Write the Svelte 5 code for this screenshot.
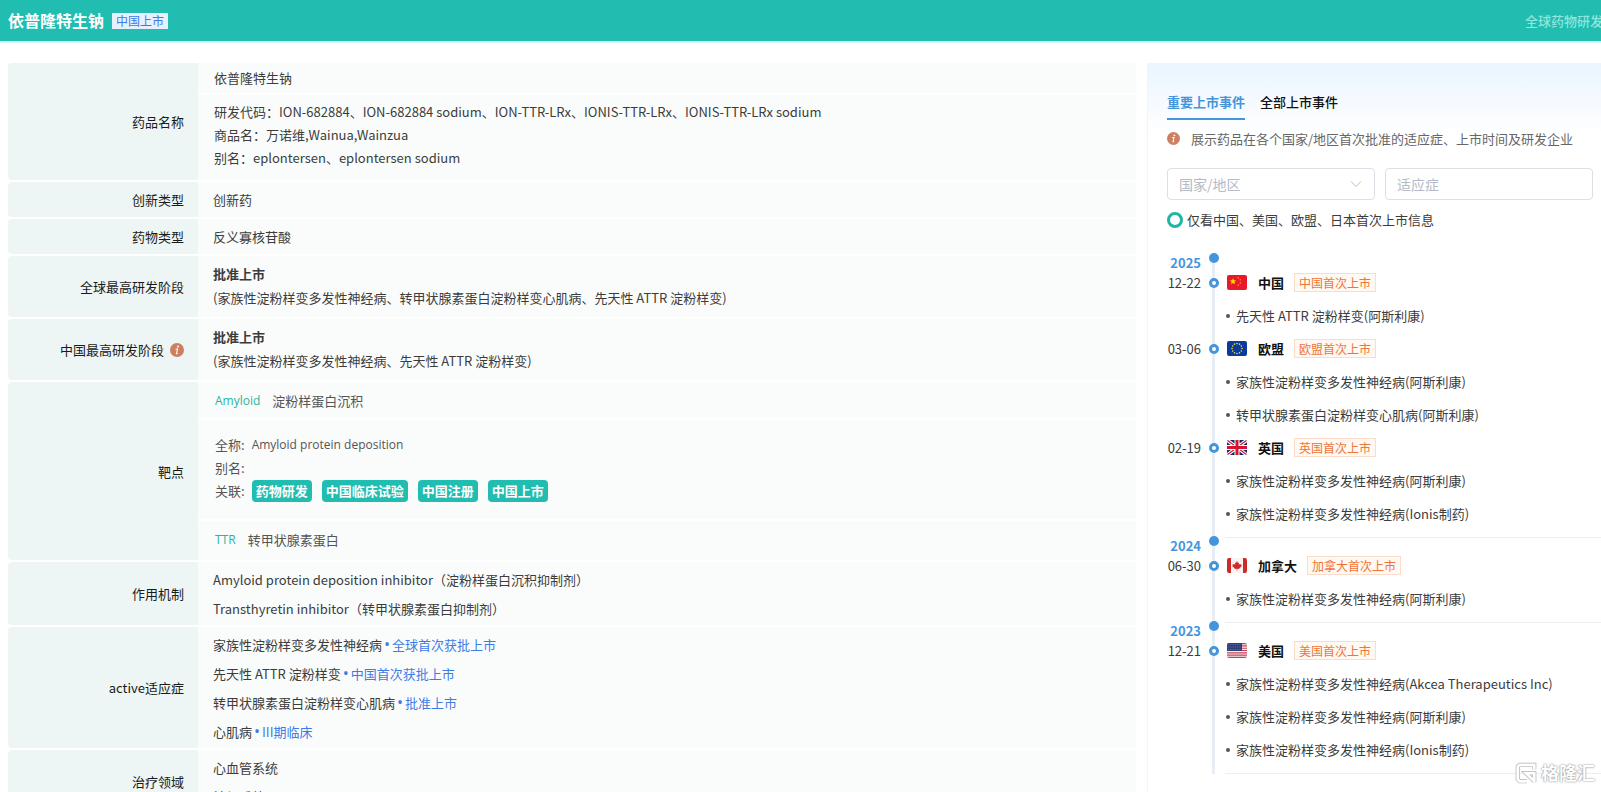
<script lang="ts">
  type Launch = {
    date: string;
    code: string;
    country: string;
    items: string[];
  };

  type YearGroup = {
    year: string;
    launches: Launch[];
  };

  const years: YearGroup[] = [
    {
      year: '2025',
      launches: [
        { date: '12-22', code: 'cn', country: '中国', items: ['先天性 ATTR 淀粉样变(阿斯利康)'] },
        {
          date: '03-06',
          code: 'eu',
          country: '欧盟',
          items: ['家族性淀粉样变多发性神经病(阿斯利康)', '转甲状腺素蛋白淀粉样变心肌病(阿斯利康)']
        },
        {
          date: '02-19',
          code: 'gb',
          country: '英国',
          items: ['家族性淀粉样变多发性神经病(阿斯利康)', '家族性淀粉样变多发性神经病(Ionis制药)']
        }
      ]
    },
    {
      year: '2024',
      launches: [
        { date: '06-30', code: 'ca', country: '加拿大', items: ['家族性淀粉样变多发性神经病(阿斯利康)'] }
      ]
    },
    {
      year: '2023',
      launches: [
        {
          date: '12-21',
          code: 'us',
          country: '美国',
          items: [
            '家族性淀粉样变多发性神经病(Akcea Therapeutics Inc)',
            '家族性淀粉样变多发性神经病(阿斯利康)',
            '家族性淀粉样变多发性神经病(Ionis制药)'
          ]
        }
      ]
    }
  ];

  const indications = [
    { name: '家族性淀粉样变多发性神经病', stage: '全球首次获批上市' },
    { name: '先天性 ATTR 淀粉样变', stage: '中国首次获批上市' },
    { name: '转甲状腺素蛋白淀粉样变心肌病', stage: '批准上市' },
    { name: '心肌病', stage: 'III期临床' }
  ];

  const related = ['药物研发', '中国临床试验', '中国注册', '中国上市'];

  let activeTab = $state('key');
  let region = $state('');
  let indication = $state('');

  // Twelve points on the EU circle
  const euStars = Array.from({ length: 12 }, (_, i) => {
    const a = (i * Math.PI) / 6;
    return { x: 10 + 5 * Math.sin(a), y: 7.5 - 5 * Math.cos(a) };
  });
</script>

{#snippet info()}
  <svg class="info" viewBox="0 0 14 14" aria-hidden="true">
    <circle cx="7" cy="7" r="7" fill="#cd7f5f" />
    <circle cx="8" cy="3.6" r="1" fill="#fff" />
    <path d="M5.6 6h1.9l-1 4.6h1.1" fill="none" stroke="#fff" stroke-width="1.1" />
  </svg>
{/snippet}

{#snippet flag(code: string)}
  <svg class="flag" viewBox="0 0 20 15" aria-hidden="true">
    {#if code === 'cn'}
      <rect width="20" height="15" fill="#e8192c" />
      <path d="M6 3.2l.9 2.1 2.3.2-1.8 1.5.6 2.2-2-1.2-2 1.2.6-2.2-1.8-1.5 2.3-.2z" fill="#ffde00" />
      <g fill="#ffb400">
        <circle cx="11.2" cy="2.8" r=".7" />
        <circle cx="13.3" cy="4.8" r=".7" />
        <circle cx="13.3" cy="8" r=".7" />
        <circle cx="11.2" cy="10.2" r=".7" />
      </g>
    {:else if code === 'eu'}
      <rect width="20" height="15" fill="#0b3a9c" />
      {#each euStars as s}
        <circle cx={s.x} cy={s.y} r=".8" fill="#e9dc45" />
      {/each}
    {:else if code === 'gb'}
      <rect width="20" height="15" fill="#1d2a68" />
      <path d="M0 0L20 15M20 0L0 15" stroke="#fff" stroke-width="3.4" />
      <path d="M0 0L20 15M20 0L0 15" stroke="#d0152f" stroke-width="1.2" />
      <path d="M10 0v15M0 7.5h20" stroke="#fff" stroke-width="5" />
      <path d="M10 0v15M0 7.5h20" stroke="#d0152f" stroke-width="3" />
    {:else if code === 'ca'}
      <rect width="20" height="15" fill="#f7f4f4" />
      <path d="M0 0h4v15H0zM16 0h4v15h-4z" fill="#cf2a27" />
      <path
        d="M10 3L11 5 12 4.500 11.800 6.800 13 5.800 13.300 6.500 14.700 6.300 14.200 7.800 14.800 8.300 12.300 10.200 12.400 11 10.300 10.700V12.500H9.700V10.700L7.600 11 7.700 10.200 5.200 8.300 5.800 7.800 5.300 6.300 6.700 6.500 7 5.800 8.200 6.800 8 4.500 9 5z"
        fill="#cf2a27"
      />
    {:else}
      <rect width="20" height="15" fill="#f6eeee" />
      <path d="M0 .6h20M0 2.9h20M0 5.2h20M0 7.5h20M0 9.8h20M0 12.1h20M0 14.4h20" stroke="#c4455a" stroke-width="1.15" />
      <rect width="15" height="8" fill="#2f3f7c" />
      <path d="M1 1.5h13M1 4h13M1 6.5h13" stroke="#7c87b4" stroke-width=".7" stroke-dasharray=".8 1" />
    {/if}
  </svg>
{/snippet}

<div class="page">
  <header class="topbar">
    <h1>依普隆特生钠</h1>
    <span class="status">中国上市</span>
    <a class="db-link" href="#db">全球药物研发</a>
  </header>

  <main>
    <table class="detail">
      <tbody>
        <tr>
          <th scope="row">药品名称</th>
          <td class="stacked">
            <div class="name">依普隆特生钠</div>
            <div class="aliases">
              <p>研发代码：ION-682884、ION-682884 sodium、ION-TTR-LRx、IONIS-TTR-LRx、IONIS-TTR-LRx sodium</p>
              <p>商品名：万诺维,Wainua,Wainzua</p>
              <p>别名：eplontersen、eplontersen sodium</p>
            </div>
          </td>
        </tr>
        <tr>
          <th scope="row">创新类型</th>
          <td class="single">创新药</td>
        </tr>
        <tr>
          <th scope="row">药物类型</th>
          <td class="single">反义寡核苷酸</td>
        </tr>
        <tr>
          <th scope="row">全球最高研发阶段</th>
          <td class="stage">
            <p><b>批准上市</b></p>
            <p>(家族性淀粉样变多发性神经病、转甲状腺素蛋白淀粉样变心肌病、先天性 ATTR 淀粉样变)</p>
          </td>
        </tr>
        <tr>
          <th scope="row"><span class="with-info">中国最高研发阶段 {@render info()}</span></th>
          <td class="stage">
            <p><b>批准上市</b></p>
            <p>(家族性淀粉样变多发性神经病、先天性 ATTR 淀粉样变)</p>
          </td>
        </tr>
        <tr>
          <th scope="row">靶点</th>
          <td class="stacked target">
            <div class="target-head"><a class="latin" href="#amyloid">Amyloid</a><span>淀粉样蛋白沉积</span></div>
            <div class="target-body">
              <p><span>全称:</span><span class="latin">Amyloid protein deposition</span></p>
              <p><span>别名:</span></p>
              <p>
                <span>关联:</span>
                <span class="related">
                  {#each related as r}
                    <button type="button">{r}</button>
                  {/each}
                </span>
              </p>
            </div>
            <div class="target-head"><a class="latin" href="#ttr">TTR</a><span>转甲状腺素蛋白</span></div>
          </td>
        </tr>
        <tr>
          <th scope="row">作用机制</th>
          <td class="list">
            <p>Amyloid protein deposition inhibitor（淀粉样蛋白沉积抑制剂）</p>
            <p>Transthyretin inhibitor（转甲状腺素蛋白抑制剂）</p>
          </td>
        </tr>
        <tr>
          <th scope="row">active适应症</th>
          <td class="list">
            {#each indications as i}
              <p>{i.name}<a href="#stage"><span class="bullet">•</span>{i.stage}</a></p>
            {/each}
          </td>
        </tr>
        <tr>
          <th scope="row">治疗领域</th>
          <td class="list">
            <p>心血管系统</p>
            <p>神经系统</p>
          </td>
        </tr>
      </tbody>
    </table>

    <aside class="events">
      <div class="tabs" role="tablist">
        <button
          type="button"
          role="tab"
          aria-selected={activeTab === 'key'}
          class:active={activeTab === 'key'}
          onclick={() => (activeTab = 'key')}>重要上市事件</button>
        <button
          type="button"
          role="tab"
          aria-selected={activeTab === 'all'}
          class:active={activeTab === 'all'}
          onclick={() => (activeTab = 'all')}>全部上市事件</button>
      </div>

      <p class="hint">{@render info()}展示药品在各个国家/地区首次批准的适应症、上市时间及研发企业</p>

      <div class="filters">
        <div class="select">
          <select aria-label="国家/地区" bind:value={region}>
            <option value="">国家/地区</option>
          </select>
          <svg class="chevron" viewBox="0 0 12 12" aria-hidden="true">
            <path d="M1 3.5l5 5 5-5" fill="none" stroke="#b5bac4" stroke-width="1" />
          </svg>
        </div>
        <input type="text" aria-label="适应症" placeholder="适应症" bind:value={indication} />
      </div>

      <label class="only">
        <input type="radio" name="only" value="main" />
        仅看中国、美国、欧盟、日本首次上市信息
      </label>

      <div class="timeline">
        {#each years as group}
          <section>
            <div class="row year">
              <strong>{group.year}</strong>
              <i class="dot"></i>
            </div>
            {#each group.launches as launch}
              <div class="row">
                <time>{launch.date}</time>
                <i class="dot ring"></i>
                <div class="country">
                  {@render flag(launch.code)}
                  <b>{launch.country}</b>
                  <span class="tag">{launch.country}首次上市</span>
                </div>
              </div>
              <ul>
                {#each launch.items as item}
                  <li>{item}</li>
                {/each}
              </ul>
            {/each}
          </section>
        {/each}
      </div>
    </aside>
  </main>

  <div class="watermark">
    <svg viewBox="0 0 24 24" aria-hidden="true">
      <path d="M21 8V3H5L3 5v14l2 2h8M21 22V12h-9l9 9" fill="none" stroke="#b0b0b0" stroke-width="4.5" />
      <path d="M21 8V3H5L3 5v14l2 2h8M21 22V12h-9l9 9" fill="none" stroke="#fff" stroke-width="3" />
    </svg>
    <span>格隆汇</span>
  </div>
</div>

<style>
  :global(body) {
    margin: 0;
  }

  .page {
    position: relative;
    height: 100vh;
    overflow: hidden;
    background: #fff;
    color: #3c3c3c;
    font-family: 'Noto Sans CJK SC', sans-serif;
    font-size: 13px;
    line-height: 23px;
  }

  .page * {
    box-sizing: border-box;
  }

  p,
  ul {
    margin: 0;
    padding: 0;
  }

  a {
    text-decoration: none;
  }

  button,
  input,
  select {
    font: inherit;
  }

  .topbar {
    display: flex;
    align-items: center;
    gap: 8px;
    height: 41px;
    padding-left: 8px;
    background: #20bdb0;
    box-shadow: 0 2px 0 #d5f1ef;
  }

  h1 {
    margin: 0;
    color: #fff;
    font-size: 16px;
    font-weight: 700;
  }

  .status {
    padding: 0 4px;
    background: #e6f0ff;
    color: #3f7be6;
    font-size: 12px;
    line-height: 16px;
  }

  .db-link {
    margin-right: -2px;
    margin-left: auto;
    color: #8ee6de;
    font-weight: 500;
    white-space: nowrap;
  }

  main {
    display: grid;
    grid-template-columns: minmax(0, 1fr) 454px;
    align-items: start;
    gap: 11px;
    padding: 20px 0 0 8px;
  }

  .detail {
    width: 100%;
    border-spacing: 0 2px;
  }

  th,
  td {
    padding: 0;
    text-align: left;
    vertical-align: middle;
  }

  th {
    width: 190px;
    padding-right: 14px;
    border-radius: 4px 0 0 4px;
    background: #edf6f5;
    color: #1a1a1a;
    font-weight: 400;
    text-align: right;
  }

  td {
    padding: 0 15px;
    background: #f9fcfb;
  }

  td.single {
    padding-top: 6px;
    padding-bottom: 6px;
  }

  td.stage {
    padding-top: 6px;
    padding-bottom: 7px;
  }

  .stage p {
    line-height: 24px;
  }

  td.list {
    padding-top: 3px;
    padding-bottom: 2px;
  }

  .list p {
    line-height: 29px;
  }

  .list a {
    color: #3f7be6;
  }

  .bullet {
    padding: 0 2px;
    font-family: 'Open Sans', sans-serif;
    font-size: 16px;
    line-height: 1;
  }

  td.stacked {
    padding: 0;
  }

  .name {
    padding: 3px 16px 4px;
    border-bottom: 2px solid #fff;
  }

  .aliases {
    padding: 5px 16px 11px;
  }

  .with-info {
    display: inline-flex;
    align-items: center;
    gap: 6px;
  }

  .info {
    flex: none;
    width: 14px;
    height: 14px;
  }

  td.target {
    padding-bottom: 3px;
    color: #555;
  }

  .latin {
    font-family: 'Open Sans', sans-serif;
    font-size: 12px;
  }

  .target-head {
    display: flex;
    gap: 12px;
    padding: 7px 17px 6px;
  }

  .target-head a {
    color: #2fb3a0;
  }

  .target-body {
    padding: 13px 17px 17px;
    border-top: 2px solid #fdfefe;
    border-bottom: 2px solid #fdfefe;
  }

  .target-body p {
    display: flex;
    gap: 7px;
  }

  .related {
    display: flex;
    align-items: center;
    gap: 10px;
  }

  .related button {
    padding: 0 4px;
    border: 0;
    border-radius: 4px;
    background: #20bdb0;
    color: #fff;
    font-weight: 700;
    line-height: 22px;
  }

  .events {
    margin-top: 2px;
    min-height: 100vh;
    padding: 27px 0 0 19px;
    border-left: 1px solid #f2f5f8;
    background: linear-gradient(#eaf5ff, #fff 72px);
  }

  .tabs {
    display: flex;
    gap: 15px;
  }

  .tabs button {
    padding: 0 0 5px;
    border: 0;
    border-bottom: 2px solid transparent;
    background: none;
    color: #111;
    font-weight: 500;
  }

  .tabs button.active {
    border-color: #4595dc;
    color: #4595dc;
    font-weight: 700;
  }

  .hint {
    display: flex;
    align-items: center;
    gap: 11px;
    margin-top: 7px;
    color: #666;
    white-space: nowrap;
  }

  .hint .info {
    width: 13px;
    height: 13px;
  }

  .filters {
    display: grid;
    grid-template-columns: 1fr 1fr;
    gap: 10px;
    margin: 18px 8px 0 0;
  }

  .select {
    position: relative;
  }

  .filters select,
  .filters input {
    display: block;
    width: 100%;
    height: 32px;
    padding: 0 11px;
    border: 1px solid #dcdfe6;
    border-radius: 4px;
    outline: none;
    appearance: none;
    background: #fff;
    color: #b5bac4;
    font-size: 14px;
  }

  .filters input::placeholder {
    color: #b5bac4;
  }

  .chevron {
    position: absolute;
    top: 10px;
    right: 13px;
    width: 12px;
    height: 12px;
    pointer-events: none;
  }

  .only {
    display: flex;
    align-items: center;
    gap: 4px;
    margin-top: 8px;
  }

  .only input {
    width: 16px;
    height: 16px;
    margin: 0;
    border: 3px solid #20b5a6;
    border-radius: 50%;
    appearance: none;
    background: #fff;
  }

  .timeline {
    position: relative;
    margin-top: 22px;
  }

  .timeline::before {
    position: absolute;
    top: 4px;
    bottom: -2px;
    left: 45px;
    width: 3px;
    background: #e8edf6;
    content: '';
  }

  section {
    position: relative;
    padding-bottom: 6px;
  }

  section::after {
    position: absolute;
    right: 0;
    bottom: -2px;
    left: 58px;
    height: 1px;
    background: #ebeef2;
    content: '';
  }

  .row {
    display: grid;
    grid-template-columns: 34px 10px 1fr;
    align-items: center;
    column-gap: 8px;
    height: 33px;
  }

  .year {
    align-items: start;
    height: 20px;
    margin-bottom: -7px;
  }

  .year strong {
    color: #4595dc;
    line-height: 20px;
    text-align: right;
  }

  time {
    text-align: right;
  }

  .dot {
    width: 10px;
    height: 10px;
    border-radius: 50%;
    background: #4595dc;
  }

  .dot.ring {
    border: 3px solid #4595dc;
    background: #fff;
  }

  .country {
    display: flex;
    align-items: center;
  }

  .flag {
    width: 20px;
    height: 15px;
    margin-right: 11px;
    border-radius: 2px;
  }

  .country b {
    color: #111;
  }

  .tag {
    margin-left: 10px;
    padding: 0 4px;
    border: 1px solid #fbdcc8;
    background: #fff8f3;
    color: #ee7538;
    font-size: 12px;
    line-height: 17px;
  }

  ul {
    padding-left: 59px;
    list-style: none;
  }

  li {
    display: flex;
    align-items: center;
    gap: 6px;
    line-height: 33px;
  }

  li::before {
    width: 4px;
    height: 4px;
    border-radius: 50%;
    background: #555;
    content: '';
  }

  .watermark {
    position: absolute;
    right: 6px;
    bottom: 8px;
    display: flex;
    align-items: center;
    gap: 4px;
    color: #fff;
    font-size: 18px;
    font-weight: 700;
    text-shadow: 0 0 1px #888, 0 0 2px #999;
  }

  .watermark svg {
    width: 22px;
    height: 22px;
  }
</style>
